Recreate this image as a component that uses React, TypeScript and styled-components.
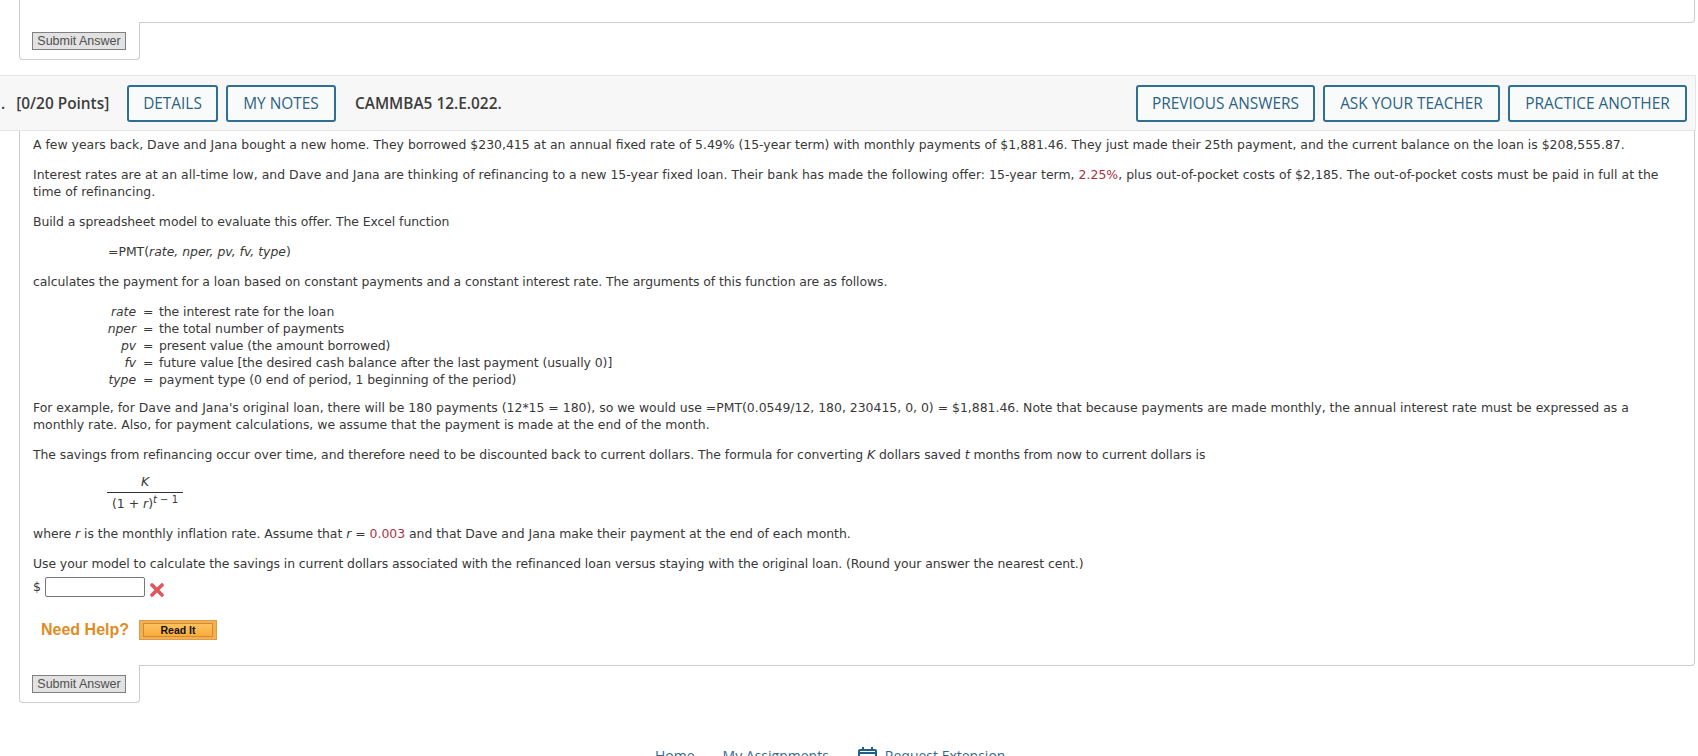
import React from 'react';
import styled, { createGlobalStyle } from 'styled-components';

const GlobalStyle = createGlobalStyle`
    html, body {
        margin: 0;
        padding: 0;
        background: #fff;
    }
    body {
        height: 756px;
        overflow: hidden;
    }
`;

const Page = styled.div`
    width: 1698px;
    height: 756px;
    overflow: hidden;
    font-family: 'DejaVu Sans', Verdana, sans-serif;
    font-size: 12.43px;
    color: #383838;
`;

// 题目卡片
const Card = styled.div<{ $height: number }>`
    height: ${(p) => p.$height}px;
    box-sizing: border-box;
    margin: 0 3px 0 19px;
    border: 1px solid #ccc;
    border-top: none;
    border-radius: 0 0 4px 0;
`;

const SubmitTab = styled.div`
    position: relative;
    box-sizing: border-box;
    width: 121px;
    height: 38px;
    margin: -1px 0 0 19px;
    padding: 10px 0 0 12px;
    background: #fff;
    border: 1px solid #ccc;
    border-top: none;
    border-radius: 0 0 4px 4px;
`;

const SubmitButton = styled.button`
    display: block;
    box-sizing: border-box;
    width: 94px;
    height: 18px;
    padding: 0;
    border: 1px solid #808080;
    background: #e2e2e2;
    color: #505050;
    font: 12.5px 'Liberation Sans', Arial, sans-serif;
`;

const HeaderBar = styled.div`
    box-sizing: border-box;
    height: 56px;
    margin: 15px 2px 0 0;
    padding: 0 8px 0 0;
    display: flex;
    align-items: center;
    background: #f7f7f7;
    border: 1px solid #e6e6e6;
    border-left: none;
    font-family: 'Open Sans', sans-serif;
    font-size: 15.4px;
    font-weight: 600;
    color: #3d3d3d;
`;

const Points = styled.span`
    width: 127px;
    white-space: pre;
`;

const Dot = styled.span`
    margin: 0 7px 0 1px;
`;

const HeaderButton = styled.div<{ $width: number }>`
    box-sizing: border-box;
    width: ${(p) => p.$width}px;
    height: 37px;
    display: flex;
    align-items: center;
    justify-content: center;
    border: 2px solid #2f6f8f;
    border-radius: 3px;
    background: #f9fafa;
    color: #2b6384;
    font-weight: 500;
    white-space: nowrap;
`;

const LeftButtons = styled.div`
    display: flex;
    gap: 8px;
`;

const RightButtons = styled.div`
    display: flex;
    gap: 8px;
    margin-left: auto;
`;

const Code = styled.span`
    margin-left: 19px;
`;

const QuestionBody = styled.div`
    box-sizing: border-box;
    height: 535px;
    margin: 0 3px 0 19px;
    padding: 5px 14px 0 13px;
    border: 1px solid #ccc;
    border-top: none;
    border-radius: 0 0 4px 0;
`;

const Para = styled.p<{ $tracking?: number; $lineHeight?: number }>`
    margin: 0 0 12.5px;
    line-height: ${(p) => p.$lineHeight ?? 17.5}px;
    letter-spacing: ${(p) => p.$tracking ?? 0}px;
`;

const Formula = styled.p`
    margin: 0 0 12.5px 75px;
    line-height: 17.5px;
`;

const DefList = styled.div`
    display: grid;
    grid-template-columns: 50px 9px auto;
    justify-content: start;
    column-gap: 7px;
    margin: 0 0 11px 53px;
    line-height: 17px;
    letter-spacing: -0.06px;
`;

const DefName = styled.span`
    text-align: right;
    white-space: nowrap;
    font-style: italic;
`;

const Red = styled.span`
    color: #a8323f;
`;

const Fraction = styled.div`
    width: 76px;
    margin: -3px 0 12px 74px;
    text-align: center;
    line-height: 18px;
`;

const Numerator = styled.div`
    border-bottom: 1px solid #333;
    padding-bottom: 1px;
    font-style: italic;
`;

const Denominator = styled.div`
    padding-top: 2px;
    white-space: nowrap;

    sup {
        font-size: 10px;
        line-height: 0;
    }
`;

const AnswerRow = styled.div`
    display: flex;
    align-items: flex-start;
    margin-top: -8px;
    height: 20px;
`;

const Dollar = styled.span`
    width: 12px;
    line-height: 20px;
`;

const AnswerInput = styled.input`
    box-sizing: border-box;
    width: 100px;
    height: 20px;
    padding: 0;
    border: 1px solid #777;
    border-radius: 2px;
    background: #fff;
`;

const WrongMark = styled.svg`
    margin: 6px 0 0 5px;
`;

const HelpRow = styled.div`
    display: flex;
    align-items: center;
    gap: 10px;
    margin: 23px 0 0 8px;
`;

const HelpLabel = styled.span`
    font: bold 16px 'Liberation Sans', Arial, sans-serif;
    color: #e08c24;
`;

const ReadItButton = styled.div`
    box-sizing: border-box;
    width: 78px;
    height: 20px;
    padding: 2px 3px;
    background: #f4b04e;
    border: 1px solid #dc9a4a;
`;

const ReadItInner = styled.div`
    box-sizing: border-box;
    height: 100%;
    display: flex;
    align-items: center;
    justify-content: center;
    background: linear-gradient(#fcc25f, #f9ac3c);
    border: 1px solid #cf8a33;
    color: #111;
    font: bold 10.5px 'Liberation Sans', Arial, sans-serif;
`;

const Footer = styled.div`
    margin-top: 43px;
    display: flex;
    align-items: center;
    justify-content: flex-start;
    padding-left: 655px;
    font-family: 'Open Sans', sans-serif;
    font-size: 14px;
    color: #33698a;
    line-height: 20px;
`;

const FooterLink = styled.span<{ $gap: number }>`
    margin-right: ${(p) => p.$gap}px;
    display: inline-flex;
    align-items: center;
    gap: 8px;
    white-space: nowrap;
`;

const defs = [
    ['rate', 'the interest rate for the loan'],
    ['nper', 'the total number of payments'],
    ['pv', 'present value (the amount borrowed)'],
    ['fv', 'future value [the desired cash balance after the last payment (usually 0)]'],
    ['type', 'payment type (0 end of period, 1 beginning of the period)'],
];

const App = () => {
    return (
        <>
            <GlobalStyle />
            <Page>
                <Card $height={23} />
                <SubmitTab>
                    <SubmitButton>Submit Answer</SubmitButton>
                </SubmitTab>

                {/* 标题条 */}
                <HeaderBar>
                    <Points>
                        <Dot>.</Dot> [0/20 Points]
                    </Points>
                    <LeftButtons>
                        <HeaderButton $width={91}>DETAILS</HeaderButton>
                        <HeaderButton $width={110}>MY NOTES</HeaderButton>
                    </LeftButtons>
                    <Code>CAMMBA5 12.E.022.</Code>
                    <RightButtons>
                        <HeaderButton $width={179}>PREVIOUS ANSWERS</HeaderButton>
                        <HeaderButton $width={177}>ASK YOUR TEACHER</HeaderButton>
                        <HeaderButton $width={179}>PRACTICE ANOTHER</HeaderButton>
                    </RightButtons>
                </HeaderBar>

                <QuestionBody>
                    <Para>
                        A few years back, Dave and Jana bought a new home. They borrowed $230,415 at an annual fixed
                        rate of 5.49% (15-year term) with monthly payments of $1,881.46. They just made their 25th
                        payment, and the current balance on the loan is $208,555.87.
                    </Para>
                    <Para $lineHeight={17} $tracking={0.03}>
                        Interest rates are at an all-time low, and Dave and Jana are thinking of refinancing to a new
                        15-year fixed loan. Their bank has made the following offer: 15-year term, <Red>2.25%</Red>,
                        plus out-of-pocket costs of $2,185. The out-of-pocket costs must be paid in full at the time of
                        refinancing.
                    </Para>
                    <Para $tracking={-0.08}>Build a spreadsheet model to evaluate this offer. The Excel function</Para>
                    <Formula>
                        =PMT(<i>rate, nper, pv, fv, type</i>)
                    </Formula>
                    <Para $tracking={-0.07}>
                        calculates the payment for a loan based on constant payments and a constant interest rate. The
                        arguments of this function are as follows.
                    </Para>
                    <DefList>
                        {defs.map(([name, text]) => (
                            <React.Fragment key={name}>
                                <DefName>{name}</DefName>
                                <span>=</span>
                                <span>{text}</span>
                            </React.Fragment>
                        ))}
                    </DefList>
                    <Para>
                        For example, for Dave and Jana's original loan, there will be 180 payments (12*15 = 180), so we
                        would use =PMT(0.0549/12, 180, 230415, 0, 0) = $1,881.46. Note that because payments are made
                        monthly, the annual interest rate must be expressed as a monthly rate. Also, for payment
                        calculations, we assume that the payment is made at the end of the month.
                    </Para>
                    <Para $tracking={-0.05}>
                        The savings from refinancing occur over time, and therefore need to be discounted back to
                        current dollars. The formula for converting <i>K</i> dollars saved <i>t</i> months from now to
                        current dollars is
                    </Para>
                    <Fraction>
                        <Numerator>K</Numerator>
                        <Denominator>
                            (1 + <i>r</i>)
                            <sup>
                                <i>t</i> − 1
                            </sup>
                        </Denominator>
                    </Fraction>
                    <Para $tracking={-0.02}>
                        where <i>r</i> is the monthly inflation rate. Assume that <i>r</i> = <Red>0.003</Red> and that
                        Dave and Jana make their payment at the end of each month.
                    </Para>
                    <Para $tracking={-0.07}>
                        Use your model to calculate the savings in current dollars associated with the refinanced loan
                        versus staying with the original loan. (Round your answer the nearest cent.)
                    </Para>
                    <AnswerRow>
                        <Dollar>$</Dollar>
                        <AnswerInput readOnly />
                        <WrongMark width="14" height="14" viewBox="0 0 14 14">
                            <path d="M2 2 L12 12 M12 2 L2 12" stroke="#e0565f" strokeWidth="3.6" strokeLinecap="round" />
                        </WrongMark>
                    </AnswerRow>
                    <HelpRow>
                        <HelpLabel>Need Help?</HelpLabel>
                        <ReadItButton>
                            <ReadItInner>Read It</ReadItInner>
                        </ReadItButton>
                    </HelpRow>
                </QuestionBody>
                <SubmitTab>
                    <SubmitButton>Submit Answer</SubmitButton>
                </SubmitTab>

                {/* 页脚，下半部分在截图外 */}
                <Footer>
                    <FooterLink $gap={28}>Home</FooterLink>
                    <FooterLink $gap={29}>My Assignments</FooterLink>
                    <FooterLink $gap={0}>
                        <svg width="19" height="18" viewBox="0 0 19 18" fill="none" stroke="#1d5f86">
                            <rect x="1" y="3" width="17" height="14" rx="1" strokeWidth="2" />
                            <path d="M5 0v4M14 0v4" strokeWidth="2" />
                            <path d="M1 6h17" strokeWidth="2" />
                            <path d="M9.5 9v6M6.5 12h6" strokeWidth="1.5" />
                        </svg>
                        Request Extension
                    </FooterLink>
                </Footer>
            </Page>
        </>
    );
};

export default App;
